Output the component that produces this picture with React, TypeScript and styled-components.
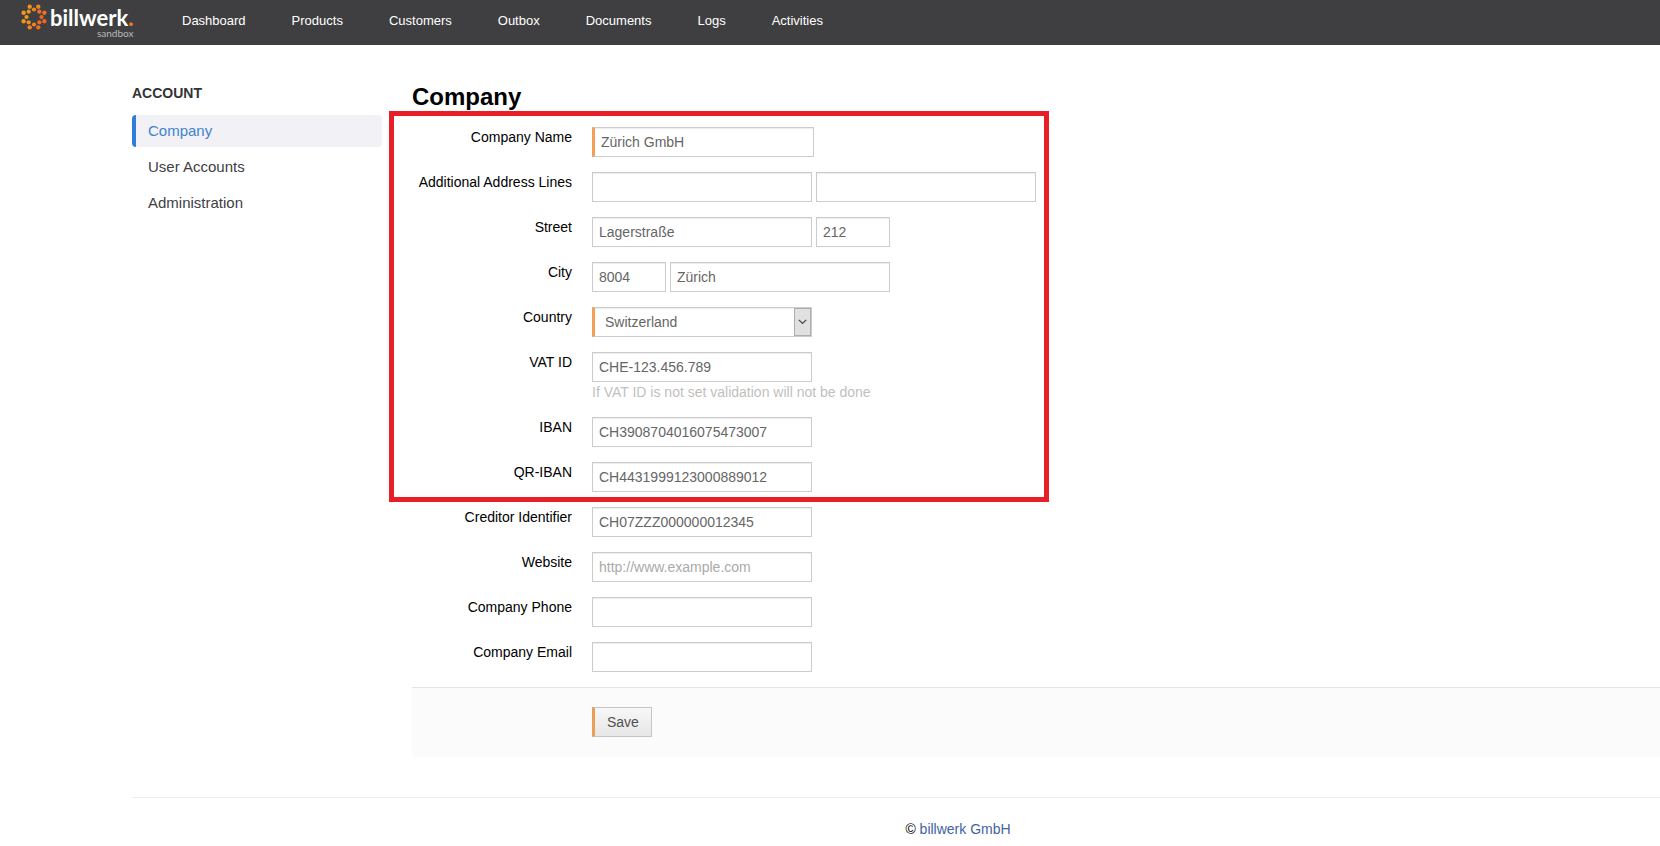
import React from "react";
import styled, { createGlobalStyle, css } from "styled-components";

const GlobalStyle = createGlobalStyle`
  *, *::before, *::after { box-sizing: border-box; }
  body {
    margin: 0;
    background: #fff;
    color: #000;
    font-family: "Liberation Sans", Arial, sans-serif;
    font-size: 14px;
    line-height: 20px;
    overflow-x: hidden;
  }
`;

const Header = styled.header`
  display: flex;
  align-items: flex-start;
  height: 45px;
  padding-left: 20px;
  background: #3f3f41;
`;

const Brand = styled.a`
  display: flex;
  width: 162px;
  color: #fff;
  text-decoration: none;
`;

const Mark = styled.svg`
  width: 28px;
  height: 28px;
  margin-top: 3px;
`;

const Wordmark = styled.span`
  display: flex;
  flex-direction: column;
  align-items: flex-end;
  margin-left: 2px;
  font-family: Lato, sans-serif;
`;

const BrandName = styled.span`
  padding-top: 7px;
  font-size: 22px;
  font-weight: 700;
  line-height: 22px;
`;

const Dot = styled.span`
  color: #ee7623;
  font-weight: 900;
`;

const BrandTag = styled.span`
  color: #b9b9ba;
  font-size: 10px;
  line-height: 8px;
`;

const MainNav = styled.nav`
  display: flex;
  gap: 46px;
  padding-top: 11px;
`;

const NavLink = styled.a`
  color: #fff;
  font-size: 13px;
  line-height: 20px;
  text-decoration: none;
`;

const Page = styled.div`
  padding-left: 132px;
`;

const Columns = styled.div`
  display: flex;
  align-items: flex-start;
  gap: 30px;
  padding-top: 38px;
`;

const Sidebar = styled.nav`
  flex: 0 0 250px;
`;

const SidebarTitle = styled.h2`
  margin: 0 0 12px;
  color: #333;
  font-size: 14px;
  line-height: 20px;
`;

const SidebarList = styled.ul`
  display: flex;
  flex-direction: column;
  gap: 4px;
  margin: 0;
  padding: 0;
  list-style: none;
`;

const SidebarLink = styled.a<{ $active?: boolean }>`
  display: block;
  padding: 6px 12px;
  border-left: 4px solid ${(p) => (p.$active ? "#2f7ed8" : "transparent")};
  border-radius: 4px;
  background: ${(p) => (p.$active ? "#f1f1f6" : "transparent")};
  color: ${(p) => (p.$active ? "#4183cc" : "#404045")};
  font-size: 15px;
  line-height: 20px;
  text-decoration: none;
`;

const Main = styled.main`
  flex: 1;
  min-width: 0;
`;

const Title = styled.h1`
  margin: 0 0 16px;
  font-size: 24px;
  line-height: 28px;
`;

const Rows = styled.div`
  display: flex;
  flex-direction: column;
  gap: 15px;
`;

const HighlightedRows = styled(Rows)`
  position: relative;
  max-width: 636px;
  margin-bottom: 15px;

  &::after {
    content: "";
    position: absolute;
    inset: -16px -1px -10px -23px;
    border: 5px solid #e91f27;
    pointer-events: none;
  }
`;

const Row = styled.div`
  display: flex;
  gap: 20px;
`;

const Label = styled.label`
  flex: 0 0 160px;
  text-align: right;
`;

const Controls = styled.div`
  display: flex;
  flex-wrap: wrap;
  column-gap: 4px;
`;

const field = css`
  height: 30px;
  border: 1px solid #ccc;
  border-radius: 0;
  background: #fff;
  box-shadow: inset 0 1px 1px rgba(0, 0, 0, 0.075);
  color: #666;
  font: 14px/20px "Liberation Sans", Arial, sans-serif;
`;

const TextInput = styled.input<{ $size?: "small"; $required?: boolean }>`
  ${field}
  width: ${(p) => (p.$size === "small" ? 74 : p.$required ? 222 : 220)}px;
  padding: 4px 6px;
  ${(p) => p.$required && "border-left: 3px solid #f3a056;"}

  &::placeholder { color: #aaa; opacity: 1; }
`;

const SelectBox = styled.span`
  position: relative;
  display: block;
`;

const Select = styled.select`
  ${field}
  display: block;
  width: 220px;
  padding: 4px 24px 4px 10px;
  border-left: 3px solid #f3a056;
  appearance: none;
`;

const SelectArrow = styled.span`
  position: absolute;
  top: 1px;
  right: 1px;
  bottom: 1px;
  display: flex;
  align-items: center;
  justify-content: center;
  width: 17px;
  border: 1px solid #adadad;
  background: #e1e1e1;
  pointer-events: none;
`;

const Help = styled.p`
  flex-basis: 100%;
  margin: 0;
  color: #bfbfbf;
`;

const Actions = styled.div`
  margin-top: 15px;
  padding: 19px 0 20px 180px;
  border-top: 1px solid #e5e5e5;
  background: #fbfbfb;
`;

const SaveButton = styled.button`
  display: block;
  height: 30px;
  padding: 0 12px;
  border: 1px solid #c5c5c5;
  border-left: 3px solid #eb9f56;
  background: linear-gradient(#f8f8f8, #e6e6e6);
  color: #505050;
  font: 14px/20px "Liberation Sans", Arial, sans-serif;
`;

const Footer = styled.footer`
  margin-top: 40px;
  padding: 21px 0 7px 124px;
  border-top: 1px solid #eee;
  text-align: center;
`;

const FooterLink = styled.a`
  color: #3f659f;
  text-decoration: none;
`;

const navItems = ["Dashboard", "Products", "Customers", "Outbox", "Documents", "Logs", "Activities"];
const sections = ["Company", "User Accounts", "Administration"];

const ringColors = ["#f0861f", "#ee6f22", "#ec6424", "#ee6f22", "#f0861f", "#f0931e", "#f09a1d", "#f0931e"];

function LogoMark() {
  return (
    <Mark viewBox="-14 -14 28 28" aria-hidden="true">
      {ringColors.map((color, i) => {
        const inner = (i * Math.PI) / 4 - Math.PI / 2;
        const outer = inner + Math.PI / 8;
        return (
          <g key={i} fill={color}>
            <circle cx={7.5 * Math.cos(inner)} cy={7.5 * Math.sin(inner)} r="2.1" />
            <circle cx={11.2 * Math.cos(outer)} cy={11.2 * Math.sin(outer)} r="2.2" />
          </g>
        );
      })}
    </Mark>
  );
}

interface FieldProps {
  id: string;
  label: string;
  value?: string;
  placeholder?: string;
  required?: boolean;
  help?: string;
}

function Field({ id, label, value = "", placeholder, required, help }: FieldProps) {
  return (
    <Row>
      <Label htmlFor={id}>{label}</Label>
      <Controls>
        <TextInput id={id} defaultValue={value} placeholder={placeholder} $required={required} />
        {help && <Help>{help}</Help>}
      </Controls>
    </Row>
  );
}

export default function App() {
  return (
    <>
      <GlobalStyle />
      <Header>
        <Brand href="#">
          <LogoMark />
          <Wordmark>
            <BrandName>
              billwerk<Dot>.</Dot>
            </BrandName>
            <BrandTag>sandbox</BrandTag>
          </Wordmark>
        </Brand>
        <MainNav>
          {navItems.map((item) => (
            <NavLink key={item} href="#">{item}</NavLink>
          ))}
        </MainNav>
      </Header>
      <Page>
        <Columns>
          <Sidebar>
            <SidebarTitle>ACCOUNT</SidebarTitle>
            <SidebarList>
              {sections.map((item, i) => (
                <li key={item}>
                  <SidebarLink href="#" $active={i === 0}>{item}</SidebarLink>
                </li>
              ))}
            </SidebarList>
          </Sidebar>
          <Main>
            <Title>Company</Title>
            <form>
              <HighlightedRows>
                <Field id="name" label="Company Name" value="Zürich GmbH" required />
                <Row>
                  <Label htmlFor="line1">Additional Address Lines</Label>
                  <Controls>
                    <TextInput id="line1" />
                    <TextInput aria-label="Additional Address Line 2" />
                  </Controls>
                </Row>
                <Row>
                  <Label htmlFor="street">Street</Label>
                  <Controls>
                    <TextInput id="street" defaultValue="Lagerstraße" />
                    <TextInput aria-label="House number" $size="small" defaultValue="212" />
                  </Controls>
                </Row>
                <Row>
                  <Label htmlFor="city">City</Label>
                  <Controls>
                    <TextInput aria-label="Postal code" $size="small" defaultValue="8004" />
                    <TextInput id="city" defaultValue="Zürich" />
                  </Controls>
                </Row>
                <Row>
                  <Label htmlFor="country">Country</Label>
                  <Controls>
                    <SelectBox>
                      <Select id="country" defaultValue="CH">
                        <option value="CH">Switzerland</option>
                      </Select>
                      <SelectArrow>
                        <svg width="9" height="6" viewBox="0 0 9 6" aria-hidden="true">
                          <path d="M.8 .8 4.5 4.5 8.2 .8" fill="none" stroke="#444" strokeWidth="1.2" />
                        </svg>
                      </SelectArrow>
                    </SelectBox>
                  </Controls>
                </Row>
                <Field
                  id="vat"
                  label="VAT ID"
                  value="CHE-123.456.789"
                  help="If VAT ID is not set validation will not be done"
                />
                <Field id="iban" label="IBAN" value="CH3908704016075473007" />
                <Field id="qriban" label="QR-IBAN" value="CH4431999123000889012" />
              </HighlightedRows>
              <Rows>
                <Field id="creditor" label="Creditor Identifier" value="CH07ZZZ000000012345" />
                <Field id="website" label="Website" placeholder="http://www.example.com" />
                <Field id="phone" label="Company Phone" />
                <Field id="email" label="Company Email" />
              </Rows>
              <Actions>
                <SaveButton type="button">Save</SaveButton>
              </Actions>
            </form>
          </Main>
        </Columns>
        <Footer>
          © <FooterLink href="#">billwerk GmbH</FooterLink>
        </Footer>
      </Page>
    </>
  );
}
